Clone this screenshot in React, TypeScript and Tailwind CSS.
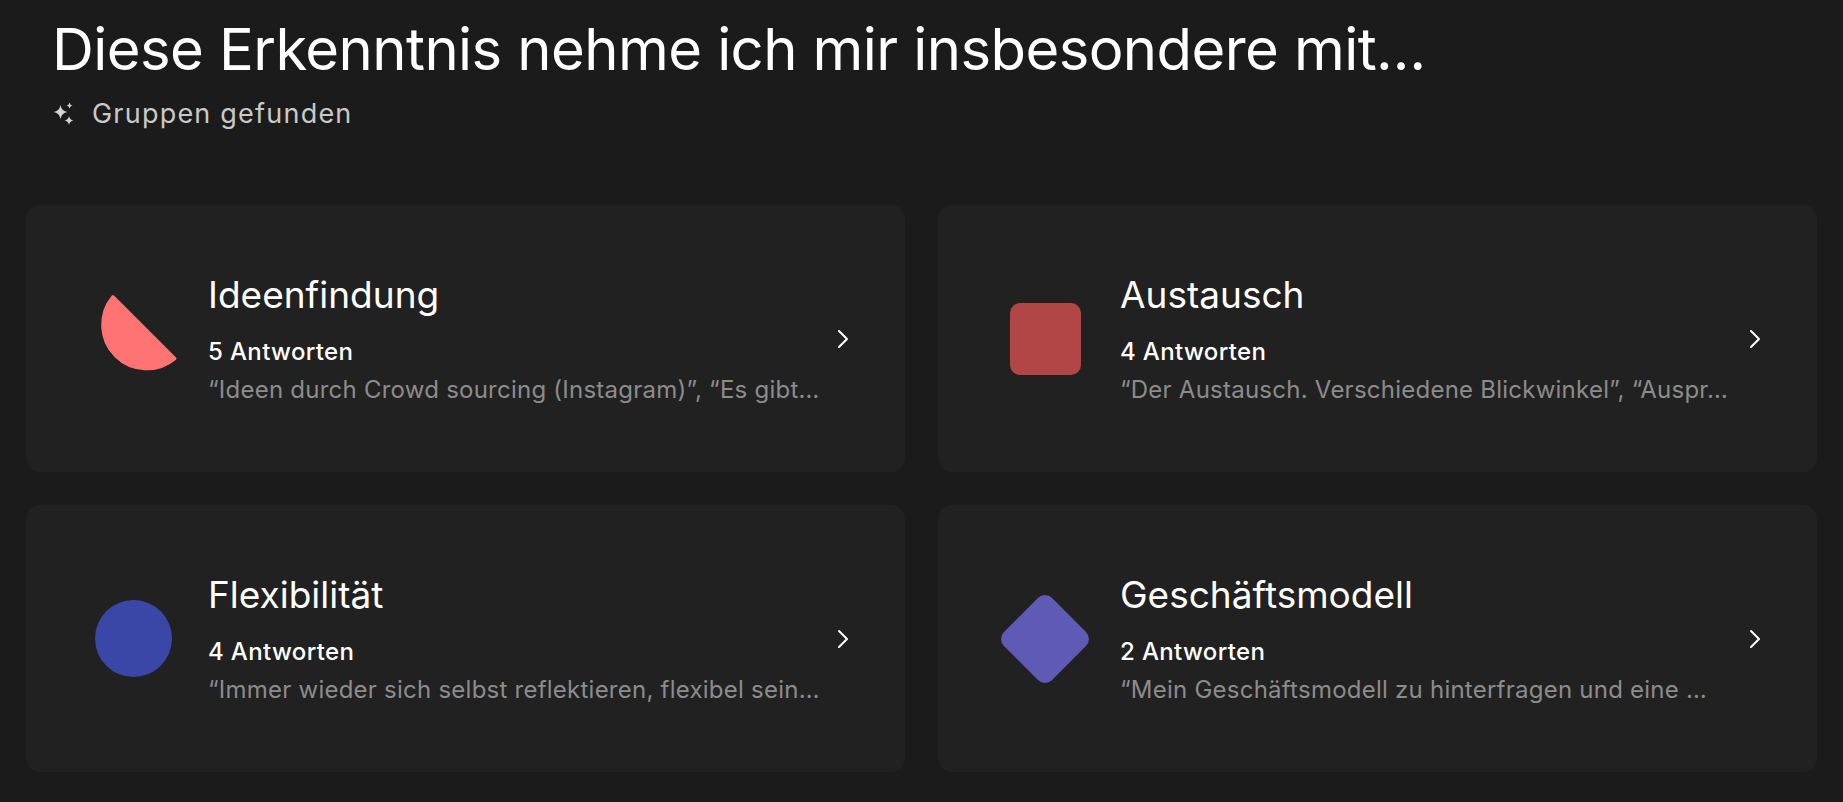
import type { ReactNode } from "react";

type Group = {
  title: string;
  count: string;
  quote: string;
  shape: ReactNode;
};

function HalfDisc() {
  return (
    <svg width="96" height="96" viewBox="0 0 96 96">
      <path
        d="M28 5.5 A44 44 0 0 0 90 67.5 Z"
        fill="#ff7373"
        stroke="#ff7373"
        strokeWidth="3"
        strokeLinejoin="round"
      />
    </svg>
  );
}

// four-point star centred on (x, y) with radius r
function star(x: number, y: number, r: number) {
  const k = r * 0.14;
  return `M${x} ${y - r} Q${x + k} ${y - k} ${x + r} ${y} Q${x + k} ${y + k} ${x} ${y + r} Q${x - k} ${y + k} ${x - r} ${y} Q${x - k} ${y - k} ${x} ${y - r} Z`;
}

function Sparkles() {
  return (
    <svg width="22" height="24" viewBox="0 0 22 24" fill="#d4d4d4">
      <path d={star(7.5, 10, 7)} />
      <path d={star(16.5, 3.5, 3)} />
      <path d={star(16, 18.5, 4.5)} />
    </svg>
  );
}

function Chevron() {
  return (
    <svg width="12" height="20" viewBox="0 0 12 20" fill="none">
      <path
        d="M2 2 L10 10 L2 18"
        stroke="#ffffff"
        strokeWidth="2"
        strokeLinecap="round"
        strokeLinejoin="round"
      />
    </svg>
  );
}

const groups: Group[] = [
  {
    title: "Ideenfindung",
    count: "5 Antworten",
    quote: "“Ideen durch Crowd sourcing (Instagram)”, “Es gibt…",
    shape: <HalfDisc />,
  },
  {
    title: "Austausch",
    count: "4 Antworten",
    quote: "“Der Austausch. Verschiedene Blickwinkel”, “Auspr…",
    shape: <div className="h-[72px] w-[71px] rounded-[10px] bg-[#b24545]" />,
  },
  {
    title: "Flexibilität",
    count: "4 Antworten",
    quote: "“Immer wieder sich selbst reflektieren, flexibel sein…",
    shape: <div className="h-[77px] w-[77px] rounded-full bg-[#3a47a7]" />,
  },
  {
    title: "Geschäftsmodell",
    count: "2 Antworten",
    quote: "“Mein Geschäftsmodell zu hinterfragen und eine …",
    shape: <div className="h-[68px] w-[68px] rotate-45 rounded-[10px] bg-[#5f5ab5]" />,
  },
];

function GroupCard({ group }: { group: Group }) {
  return (
    <div className="flex h-[267px] items-center rounded-[14px] bg-[#212121] pl-[59px] pr-[56px]">
      <div className="flex h-[96px] w-[96px] shrink-0 items-center justify-center">
        {group.shape}
      </div>
      <div className="ml-[27px] min-w-0 flex-1">
        <p className="text-[37px] leading-[44px] text-white">{group.title}</p>
        <p className="mt-[20px] text-[24px] font-medium leading-[30px] tracking-[0.015em] text-white">
          {group.count}
        </p>
        <p className="mt-[8px] truncate text-[24px] leading-[30px] tracking-[0.01em] text-[#8c8c8c]">
          {group.quote}
        </p>
      </div>
      <div className="ml-[14px] shrink-0">
        <Chevron />
      </div>
    </div>
  );
}

export default function App() {
  return (
    <div className="min-h-[802px] bg-[#1b1b1b] font-['Inter',sans-serif]">
      <header className="px-[52px] pt-[14px]">
        <h1 className="text-[58px] leading-[70px] tracking-[-0.01em] text-white">
          Diese Erkenntnis nehme ich mir insbesondere mit…
        </h1>
        <div className="mt-[13px] flex items-center gap-[17px] pl-[1px]">
          <Sparkles />
          <span className="text-[27px] leading-[34px] tracking-[0.045em] text-[#c9c9c9]">
            Gruppen gefunden
          </span>
        </div>
      </header>
      <main className="mt-[74px] grid grid-cols-2 gap-[33px] px-[26px] pb-[30px]">
        {groups.map((g) => (
          <GroupCard key={g.title} group={g} />
        ))}
      </main>
    </div>
  );
}
